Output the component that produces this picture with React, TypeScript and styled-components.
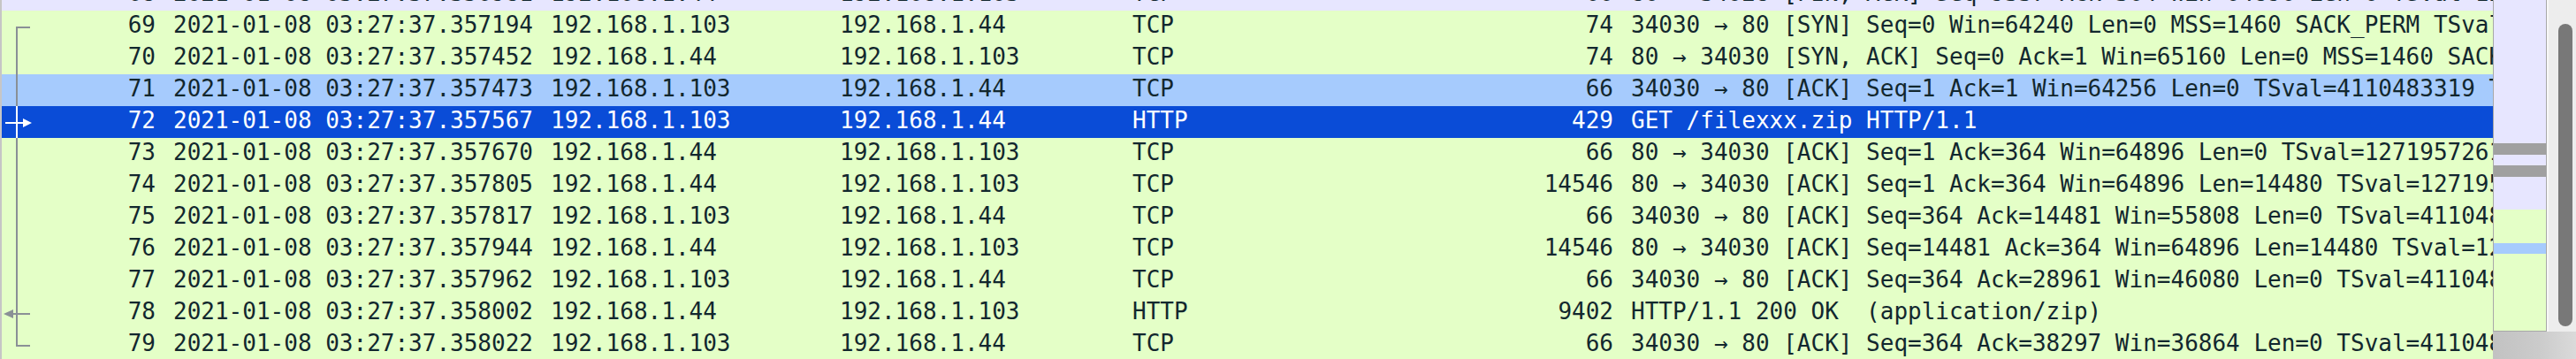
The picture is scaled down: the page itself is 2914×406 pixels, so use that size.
import React from "react"
import styled, { createGlobalStyle } from "styled-components"

const GlobalStyle = createGlobalStyle`
  html, body {
    margin: 0;
    padding: 0;
    background: #e4ffc7;
  }
  body {
    width: 2914px;
    height: 406px;
    overflow: hidden;
  }
`

const GREEN = "#e4ffc7"
const LAVENDER = "#e7e6ff"
const MARKED = "#a6cbfd"
const SELECTED = "#0a4cd7"
const INK = "#12272e"
const BRACKET = "#8a9096"

type Mark = "none" | "start" | "line" | "request" | "response" | "end"

interface Packet {
  no: number
  time: string
  src: string
  dst: string
  proto: string
  len: number
  info: string
  bg: string
  mark: Mark
  selected?: boolean
}

const A = "192.168.1.103"
const B = "192.168.1.44"

const packets: Packet[] = [
  { no: 68, time: "2021-01-08 03:27:37.356981", src: B, dst: A, proto: "TCP", len: 66, info: "80 → 34028 [FIN, ACK] Seq=9337 Ack=364 Win=64896 Len=0 TSval=1271957259 TSecr=4110483317", bg: LAVENDER, mark: "none" },
  { no: 69, time: "2021-01-08 03:27:37.357194", src: A, dst: B, proto: "TCP", len: 74, info: "34030 → 80 [SYN] Seq=0 Win=64240 Len=0 MSS=1460 SACK_PERM TSval=4110483318 TSecr=0 WS=128", bg: GREEN, mark: "start" },
  { no: 70, time: "2021-01-08 03:27:37.357452", src: B, dst: A, proto: "TCP", len: 74, info: "80 → 34030 [SYN, ACK] Seq=0 Ack=1 Win=65160 Len=0 MSS=1460 SACK_PERM TSval=1271957260 TSecr=4110483318 WS=128", bg: GREEN, mark: "line" },
  { no: 71, time: "2021-01-08 03:27:37.357473", src: A, dst: B, proto: "TCP", len: 66, info: "34030 → 80 [ACK] Seq=1 Ack=1 Win=64256 Len=0 TSval=4110483319 TSecr=1271957260", bg: MARKED, mark: "line" },
  { no: 72, time: "2021-01-08 03:27:37.357567", src: A, dst: B, proto: "HTTP", len: 429, info: "GET /filexxx.zip HTTP/1.1", bg: SELECTED, mark: "request", selected: true },
  { no: 73, time: "2021-01-08 03:27:37.357670", src: B, dst: A, proto: "TCP", len: 66, info: "80 → 34030 [ACK] Seq=1 Ack=364 Win=64896 Len=0 TSval=1271957261 TSecr=4110483319", bg: GREEN, mark: "line" },
  { no: 74, time: "2021-01-08 03:27:37.357805", src: B, dst: A, proto: "TCP", len: 14546, info: "80 → 34030 [ACK] Seq=1 Ack=364 Win=64896 Len=14480 TSval=1271957261 TSecr=4110483319", bg: GREEN, mark: "line" },
  { no: 75, time: "2021-01-08 03:27:37.357817", src: A, dst: B, proto: "TCP", len: 66, info: "34030 → 80 [ACK] Seq=364 Ack=14481 Win=55808 Len=0 TSval=4110483319 TSecr=1271957261", bg: GREEN, mark: "line" },
  { no: 76, time: "2021-01-08 03:27:37.357944", src: B, dst: A, proto: "TCP", len: 14546, info: "80 → 34030 [ACK] Seq=14481 Ack=364 Win=64896 Len=14480 TSval=1271957261 TSecr=4110483319", bg: GREEN, mark: "line" },
  { no: 77, time: "2021-01-08 03:27:37.357962", src: A, dst: B, proto: "TCP", len: 66, info: "34030 → 80 [ACK] Seq=364 Ack=28961 Win=46080 Len=0 TSval=4110483319 TSecr=1271957261", bg: GREEN, mark: "line" },
  { no: 78, time: "2021-01-08 03:27:37.358002", src: B, dst: A, proto: "HTTP", len: 9402, info: "HTTP/1.1 200 OK  (application/zip)", bg: GREEN, mark: "response" },
  { no: 79, time: "2021-01-08 03:27:37.358022", src: A, dst: B, proto: "TCP", len: 66, info: "34030 → 80 [ACK] Seq=364 Ack=38297 Win=36864 Len=0 TSval=4110483319 TSecr=1271957261", bg: GREEN, mark: "end" },
]

// minimap bands, top to bottom
const bands = [
  { color: LAVENDER, h: 162 },
  { color: "#a0a0a0", h: 13 },
  { color: LAVENDER, h: 12 },
  { color: "#a0a0a0", h: 13 },
  { color: LAVENDER, h: 37 },
  { color: GREEN, h: 38 },
  { color: MARKED, h: 12 },
]

const Window = styled.div`
  display: flex;
  width: 2914px;
  height: 406px;
  overflow: hidden;
  font-family: "DejaVu Sans Mono", "Liberation Mono", monospace;
`

const PacketList = styled.div`
  flex: 1;
  min-width: 0;
  overflow: hidden;
  border-left: 2px solid #c6c6c6;
  background: ${GREEN};
`

// list is scrolled so that packet 68 is mostly hidden
const Rows = styled.div`
  margin-top: -24px;
`

const Row = styled.div<{ $bg: string; $selected?: boolean }>`
  display: flex;
  height: 36px;
  box-sizing: border-box;
  padding-bottom: 4px;
  line-height: 32px;
  font-size: 26px;
  white-space: pre;
  background: ${p => p.$bg};
  color: ${p => (p.$selected ? "#ffffff" : INK)};
`

const Gutter = styled.div`
  flex: none;
  align-self: flex-start;
  width: 40px;
  height: 36px;

  svg {
    display: block;
  }
`

const Cell = styled.div<{ $w: number; $right?: boolean }>`
  flex: none;
  box-sizing: border-box;
  width: ${p => p.$w}px;
  padding: 0 10px;
  overflow: hidden;
  text-align: ${p => (p.$right ? "right" : "left")};
`

const InfoCell = styled.div`
  flex: 1;
  min-width: 0;
  padding-left: 10px;
  overflow: hidden;
`

const Side = styled.div`
  flex: none;
  width: 94px;
  display: flex;
  flex-direction: column;
`

const SideTop = styled.div`
  display: flex;
  height: 375px;
`

const Minimap = styled.div`
  width: 61px;
  box-sizing: border-box;
  display: flex;
  flex-direction: column;
  border: 1px solid #a8a8a8;
  border-top: none;
  background: ${GREEN};
`

const Band = styled.div<{ $color: string; $h: number }>`
  flex: none;
  height: ${p => p.$h}px;
  background: ${p => p.$color};
`

const Track = styled.div`
  flex: 1;
  box-sizing: border-box;
  padding: 27px 0 0 11px;
  background: #ededed;
  border-left: 2px solid #f7f7f7;
`

const Thumb = styled.div`
  width: 16px;
  height: 342px;
  border-radius: 8px;
  background: #787878;
`

const Corner = styled.div`
  flex: 1;
  background: linear-gradient(to right, #c2c2c2, #cbcbcb 55%, #dadada);
`

function ConversationMark({ mark, color }: { mark: Mark; color: string }) {
  if (mark === "none") return null
  const x = 17
  const y = 19
  return (
    <svg width="40" height="36" viewBox="0 0 40 36">
      <g stroke={color} strokeWidth="2" fill="none">
        {mark === "start" && <path d={`M${x} ${y} V36 M${x - 1} ${y} H32`} />}
        {mark === "end" && <path d={`M${x} 0 V${y} M${x - 1} ${y} H32`} />}
        {(mark === "line" || mark === "request" || mark === "response") && <path d={`M${x} 0 V36`} />}
        {mark === "request" && <path d={`M4 ${y} H25`} />}
        {mark === "response" && <path d={`M12 ${y} H32`} />}
      </g>
      {mark === "request" && <polygon points={`24,${y - 5} 34,${y} 24,${y + 5}`} fill={color} />}
      {mark === "response" && <polygon points={`2,${y} 13,${y - 5} 13,${y + 5}`} fill={color} />}
    </svg>
  )
}

export default function App() {
  return (
    <>
      <GlobalStyle />
      <Window>
        <PacketList>
          <Rows>
            {packets.map(p => (
              <Row key={p.no} $bg={p.bg} $selected={p.selected}>
                <Gutter>
                  <ConversationMark mark={p.mark} color={p.selected ? "#ffffff" : BRACKET} />
                </Gutter>
                <Cell $w={144} $right>{p.no}</Cell>
                <Cell $w={427}>{p.time}</Cell>
                <Cell $w={327}>{p.src}</Cell>
                <Cell $w={331}>{p.dst}</Cell>
                <Cell $w={300}>{p.proto}</Cell>
                <Cell $w={264} $right>{p.len}</Cell>
                <InfoCell>{p.info}</InfoCell>
              </Row>
            ))}
          </Rows>
        </PacketList>
        <Side>
          <SideTop>
            <Minimap>
              {bands.map((b, i) => (
                <Band key={i} $color={b.color} $h={b.h} />
              ))}
            </Minimap>
            <Track>
              <Thumb />
            </Track>
          </SideTop>
          <Corner />
        </Side>
      </Window>
    </>
  )
}
